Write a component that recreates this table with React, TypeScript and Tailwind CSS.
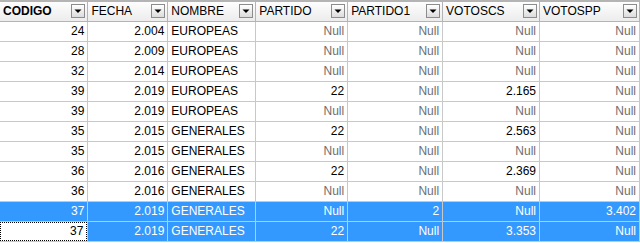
import React from "react";

type Row = {
  codigo: number;
  fecha: string;
  nombre: string;
  partido: string;
  partido1: string;
  votoscs: string;
  votospp: string;
  selected?: boolean;
  focused?: boolean;
};

const rows: Row[] = [
  { codigo: 24, fecha: "2.004", nombre: "EUROPEAS", partido: "Null", partido1: "Null", votoscs: "Null", votospp: "Null" },
  { codigo: 28, fecha: "2.009", nombre: "EUROPEAS", partido: "Null", partido1: "Null", votoscs: "Null", votospp: "Null" },
  { codigo: 32, fecha: "2.014", nombre: "EUROPEAS", partido: "Null", partido1: "Null", votoscs: "Null", votospp: "Null" },
  { codigo: 39, fecha: "2.019", nombre: "EUROPEAS", partido: "22", partido1: "Null", votoscs: "2.165", votospp: "Null" },
  { codigo: 39, fecha: "2.019", nombre: "EUROPEAS", partido: "Null", partido1: "Null", votoscs: "Null", votospp: "Null" },
  { codigo: 35, fecha: "2.015", nombre: "GENERALES", partido: "22", partido1: "Null", votoscs: "2.563", votospp: "Null" },
  { codigo: 35, fecha: "2.015", nombre: "GENERALES", partido: "Null", partido1: "Null", votoscs: "Null", votospp: "Null" },
  { codigo: 36, fecha: "2.016", nombre: "GENERALES", partido: "22", partido1: "Null", votoscs: "2.369", votospp: "Null" },
  { codigo: 36, fecha: "2.016", nombre: "GENERALES", partido: "Null", partido1: "Null", votoscs: "Null", votospp: "Null" },
  { codigo: 37, fecha: "2.019", nombre: "GENERALES", partido: "Null", partido1: "2", votoscs: "Null", votospp: "3.402", selected: true },
  { codigo: 37, fecha: "2.019", nombre: "GENERALES", partido: "22", partido1: "Null", votoscs: "3.353", votospp: "Null", selected: true, focused: true },
];

const columns = [
  { title: "CODIGO", width: "w-[88px]", bold: true },
  { title: "FECHA", width: "w-[80px]" },
  { title: "NOMBRE", width: "w-[88px]" },
  { title: "PARTIDO", width: "w-[92px]" },
  { title: "PARTIDO1", width: "w-[95px]" },
  { title: "VOTOSCS", width: "w-[97px]" },
  { title: "VOTOSPP", width: "w-[100px]" },
];

const DropButton = () => (
  <span className="flex h-[14px] w-[14px] items-center justify-center border border-[#8c8c8c] bg-gradient-to-b from-white to-[#dcdcdc]">
    <svg width="8" height="6" viewBox="0 0 8 6">
      <path d="M0.5 1.5 H7.5 L4 5 Z" fill="#000" />
    </svg>
  </span>
);

const Cell = ({
  value,
  align = "right",
  selected,
  focused,
}: {
  value: string | number;
  align?: "left" | "right";
  selected?: boolean;
  focused?: boolean;
}) => {
  const isNull = value === "Null";
  let color = isNull ? "text-[#6e6e6e]" : "text-black";
  let bg = "bg-white";
  if (selected && !focused) {
    bg = "bg-[#3399ff]";
    color = "text-white";
  }
  return (
    <td
      className={`h-[20px] border-r border-b border-[#c8c8c8] p-0 ${bg} ${color}`}
    >
      <div
        className={`flex h-[19px] items-center px-[3px] ${
          align === "right" ? "justify-end" : "justify-start"
        } ${focused ? "border border-dotted border-black" : ""}`}
      >
        {value}
      </div>
    </td>
  );
};

export default function App() {
  return (
    <div className="h-[243px] w-[640px] overflow-hidden bg-white font-['Liberation_Sans',Arial,sans-serif] text-[12px] leading-none">
      <table className="table-fixed border-collapse">
        <thead>
          <tr className="h-[20px]">
            {columns.map((c) => (
              <th
                key={c.title}
                className={`${c.width} border-t-2 border-r border-b border-[#b4b4b4] bg-gradient-to-b from-[#fdfdfd] to-[#ececec] p-0 text-left`}
              >
                <div className="flex h-[18px] items-center justify-between pl-[3px] pr-[2px]">
                  <span className={c.bold ? "font-bold text-black" : "font-normal text-black"}>
                    {c.title}
                  </span>
                  <DropButton />
                </div>
              </th>
            ))}
          </tr>
        </thead>
        <tbody>
          {rows.map((r, i) => (
            <tr key={i}>
              <Cell value={r.codigo} selected={r.selected} focused={r.focused} />
              <Cell value={r.fecha} selected={r.selected} />
              <Cell value={r.nombre} align="left" selected={r.selected} />
              <Cell value={r.partido} selected={r.selected} />
              <Cell value={r.partido1} selected={r.selected} />
              <Cell value={r.votoscs} selected={r.selected} />
              <Cell value={r.votospp} selected={r.selected} />
            </tr>
          ))}
        </tbody>
      </table>
    </div>
  );
}
